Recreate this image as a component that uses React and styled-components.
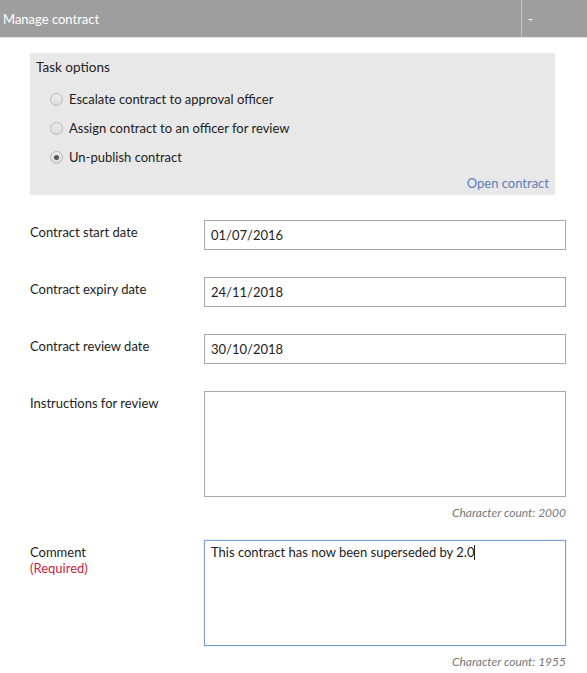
import React from "react";
import styled, { createGlobalStyle } from "styled-components";

const GlobalStyle = createGlobalStyle`
  body {
    margin: 0;
    background: #ffffff;
    font-family: "Lato", "Open Sans", sans-serif;
    font-size: 13px;
    color: #222222;
  }
`;

const Page = styled.div`
  width: 587px;
  height: 673px;
  overflow: hidden;
`;

const Header = styled.div`
  display: flex;
  height: 37px;
  background-color: #9e9e9e;
  border-bottom: 1px solid #e4e4e4;
  color: #ffffff;
`;

const HeaderTitle = styled.div`
  flex: 1;
  display: flex;
  align-items: center;
  padding-left: 3px;
  font-size: 13px;
`;

const HeaderToggle = styled.div`
  width: 59px;
  border-left: 1px solid #c4c4c4;
  display: flex;
  align-items: center;
  padding-left: 6px;
  font-size: 13px;
`;

const TaskPanel = styled.div`
  margin: 15px 32px 0 30px;
  background-color: #e8e8e8;
  padding: 6px 6px 4px 6px;
  height: 142px;
  box-sizing: border-box;
  display: flex;
  flex-direction: column;
`;

const PanelTitle = styled.div`
  font-size: 13.5px;
  color: #222222;
  margin-bottom: 16px;
`;

const RadioList = styled.div`
  display: flex;
  flex-direction: column;
  gap: 13px;
  padding-left: 14px;
`;

const RadioRow = styled.label`
  display: flex;
  align-items: center;
  gap: 6px;
  font-size: 13px;
  line-height: 16px;
`;

const RadioDot = styled.span`
  width: 11px;
  height: 11px;
  border-radius: 50%;
  border: 1px solid #b8b8b8;
  background: linear-gradient(#ececec, #dcdcdc);
  display: flex;
  align-items: center;
  justify-content: center;

  &::after {
    content: "";
    width: 5px;
    height: 5px;
    border-radius: 50%;
    background: ${(p) => (p.$checked ? "#555555" : "transparent")};
  }
`;

const OpenLink = styled.a`
  margin-top: auto;
  align-self: flex-end;
  color: #5a7fb8;
  font-size: 13px;
  text-decoration: none;
`;

const Form = styled.div`
  padding: 25px 21px 0 30px;
  display: flex;
  flex-direction: column;
`;

const FieldRow = styled.div`
  display: grid;
  grid-template-columns: 174px 1fr;
  margin-bottom: ${(p) => p.$gap || 27}px;
`;

const Label = styled.div`
  font-size: 13px;
  line-height: 16px;
  padding-top: 4px;
`;

const Required = styled.div`
  color: #c8243c;
`;

const TextInput = styled.div`
  height: 30px;
  box-sizing: border-box;
  border: 1px solid #a8a8a8;
  padding: 0 6px;
  display: flex;
  align-items: center;
  font-size: 13px;
`;

const TextArea = styled.div`
  height: 106px;
  box-sizing: border-box;
  border: 1px solid ${(p) => (p.$focused ? "#7b9fdc" : "#a8a8a8")};
  box-shadow: ${(p) => (p.$focused ? "0 0 1px #8fb0e8" : "none")};
  padding: 2px 6px;
  font-size: 13px;
  line-height: 18px;
`;

const Caret = styled.span`
  display: inline-block;
  width: 1px;
  height: 15px;
  background: #222222;
  vertical-align: -3px;
`;

const CharCount = styled.div`
  grid-column: 2;
  text-align: right;
  font-style: italic;
  font-size: 12px;
  color: #777777;
  margin-top: 8px;
`;

const options = [
  { label: "Escalate contract to approval officer", checked: false },
  { label: "Assign contract to an officer for review", checked: false },
  { label: "Un-publish contract", checked: true },
];

const dates = [
  { label: "Contract start date", value: "01/07/2016" },
  { label: "Contract expiry date", value: "24/11/2018" },
  { label: "Contract review date", value: "30/10/2018" },
];

export default function App() {
  return (
    <Page>
      <GlobalStyle />
      <Header>
        <HeaderTitle>Manage contract</HeaderTitle>
        <HeaderToggle>-</HeaderToggle>
      </Header>
      <TaskPanel>
        <PanelTitle>Task options</PanelTitle>
        <RadioList>
          {options.map((o) => (
            <RadioRow key={o.label}>
              <RadioDot $checked={o.checked} />
              {o.label}
            </RadioRow>
          ))}
        </RadioList>
        <OpenLink href="#">Open contract</OpenLink>
      </TaskPanel>
      <Form>
        {dates.map((d) => (
          <FieldRow key={d.label}>
            <Label>{d.label}</Label>
            <TextInput>{d.value}</TextInput>
          </FieldRow>
        ))}
        <FieldRow $gap={20}>
          <Label>Instructions for review</Label>
          <TextArea />
          <CharCount>Character count: 2000</CharCount>
        </FieldRow>
        <FieldRow>
          <Label>
            Comment
            <Required>(Required)</Required>
          </Label>
          <TextArea $focused>
            This contract has now been superseded by 2.0
            <Caret />
          </TextArea>
          <CharCount>Character count: 1955</CharCount>
        </FieldRow>
      </Form>
    </Page>
  );
}
